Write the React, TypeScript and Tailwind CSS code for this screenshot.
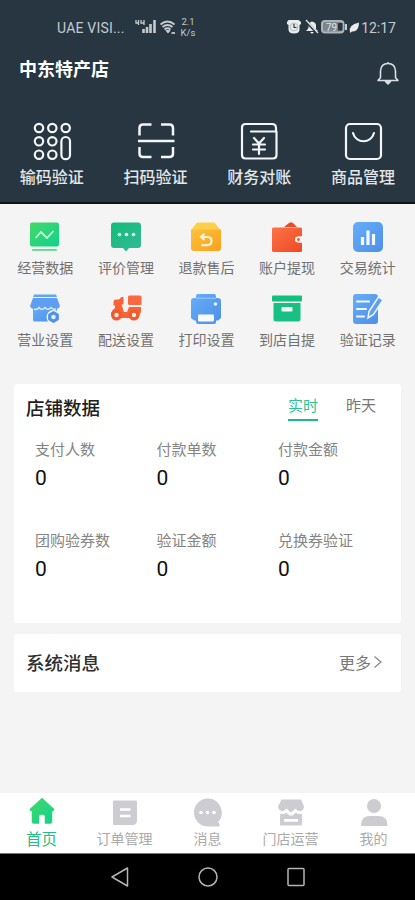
import type { ReactNode } from 'react';

const Svg = ({ size = 32, children }: { size?: number; children: ReactNode }) => (
  <svg width={size} height={size} viewBox={`0 0 ${size} ${size}`} fill="none" className="block shrink-0">{children}</svg>
);

const line = { stroke: '#f3f5f6', strokeWidth: 2.2, strokeLinecap: 'round', strokeLinejoin: 'round' } as const;

// 40x40 line icons of the dark header
const headerActions = [
  {
    label: '输码验证',
    icon: (
      <Svg size={40}>
        <g {...line}>
          {[[7, 7], [20.3, 7], [33.7, 7], [7, 20.3], [20.3, 20.3], [7, 33.7], [20.3, 33.7]].map(([x, y]) => (
            <circle key={`${x}-${y}`} cx={x} cy={y} r="4.2" />
          ))}
          <rect x="29.4" y="16" width="8.6" height="22.2" rx="4.3" />
        </g>
      </Svg>
    ),
  },
  {
    label: '扫码验证',
    icon: (
      <Svg size={40}>
        <path {...line} strokeWidth="2.5" strokeLinecap="butt" d="M3.5 14.5V7Q3.5 3.500 7 3.500H15.500M25 3.500H33.500Q37 3.500 37 7V14.500M3.500 26V32.500Q3.500 36 7 36H15.500M25 36H33.500Q37 36 37 32.500V26M2 20H38.500" />
      </Svg>
    ),
  },
  {
    label: '财务对账',
    icon: (
      <Svg size={40}>
        <path {...line} d="M33 3H6.500Q3 3 3 6.500V34Q3 37.500 6.500 37.500H34Q37.500 37.500 37.500 34V10.500H12M33 3Q37 3 37 7V10.500M15 17L20 22.500L25 17M20 22.500V33M14 23.500H26M14 28.500H26" />
      </Svg>
    ),
  },
  {
    label: '商品管理',
    icon: (
      <Svg size={40}>
        <rect {...line} x="3" y="3" width="35" height="35" rx="4" />
        <path {...line} d="M10 12C13 23 28 23 31 12" />
      </Svg>
    ),
  },
];

const tools = [
  {
    label: '经营数据',
    icon: (
      <Svg>
        <rect x="1" y="1.500" width="29" height="24" rx="2" fill="url(#green)" />
        <path d="M6.500 17L12 11L18 17L24.500 10" stroke="#c9ffd9" strokeWidth="1.800" />
        <rect x="3" y="28" width="25" height="1.800" rx="0.900" fill="#4fdb89" />
      </Svg>
    ),
  },
  {
    label: '评价管理',
    icon: (
      <Svg>
        <path d="M4 1.500H28Q31 1.500 31 4.500V24Q31 27 28 27H19L16 30.500L13 27H4Q1 27 1 24V4.500Q1 1.500 4 1.500Z" fill="url(#teal)" />
        <g fill="#e6fff5"><circle cx="9.500" cy="13.500" r="1.800" /><circle cx="16.500" cy="13.500" r="1.800" /><circle cx="23.500" cy="13.500" r="1.800" /></g>
      </Svg>
    ),
  },
  {
    label: '退款售后',
    icon: (
      <Svg>
        <path d="M7 1.500H24.500L30.500 9H1Z" fill="#ffcf4b" />
        <path d="M1 8.500H31V27Q31 30 28 30H4Q1 30 1 27Z" fill="url(#amber)" />
        <path d="M11.500 16H17.500Q21.500 16 21.500 20T17.500 24.200H11.500M14.500 12.800L11 16L14.500 19" stroke="#fff4d4" strokeWidth="2.200" />
      </Svg>
    ),
  },
  {
    label: '账户提现',
    icon: (
      <Svg>
        <path d="M13 6L18 2Q20 0.500 22 2L26 6Z" fill="#e74e2c" />
        <path d="M2.500 6.500H29.500Q31 6.500 31 8V15.500H27.500Q24 15.500 24 18.500T27.500 21.500H31V29.500Q31 31 29.500 31H2.500Q1 31 1 29.500V8Q1 6.500 2.500 6.500Z" fill="url(#red)" />
        <path d="M31 15.500H27.500Q24 15.500 24 18.500T27.500 21.500H31Z" fill="#fff5ef" />
        <circle cx="27.500" cy="18.500" r="1.500" fill="#ed623c" />
      </Svg>
    ),
  },
  {
    label: '交易统计',
    icon: (
      <Svg>
        <rect x="1" y="1" width="30" height="30" rx="5" fill="url(#blue)" />
        <path d="M10.500 16V24M16 9.500V24M21.500 13V24" stroke="#f2faff" strokeWidth="3.200" />
      </Svg>
    ),
  },
  {
    label: '营业设置',
    icon: (
      <Svg>
        <path d="M4 13H28V27Q28 28.500 26.500 28.500H5.500Q4 28.500 4 27Z" fill="url(#blue)" />
        <path d="M5 1.500H27L28 4H4Z" fill="#63a4f3" />
        <path d="M4 5H28L31 13Q30 16 27 16H5Q2 16 1 13Z" fill="#5f9ff1" />
        <path d="M5 16Q8 17.500 10 14.500Q13 18 16 14.500Q19 18 22 14.500Q24 17 27 16" stroke="#d9ebff" strokeWidth="1.400" />
        <circle cx="24.500" cy="24" r="7" fill="#f4f4f4" />
        <path d="M24.500 18.500L29.300 21.200V26.800L24.500 29.500L19.700 26.800V21.200Z" fill="#4e92e9" stroke="#4e92e9" strokeLinejoin="round" />
        <circle cx="24.500" cy="24" r="2.300" fill="#e2f0ff" />
      </Svg>
    ),
  },
  {
    label: '配送设置',
    icon: (
      <Svg>
        <path d="M3.500 8.500Q3.500 6.500 6 6.500H9L11.500 4H13.500V11.500H11.500L14 19H17L19 14H31V19L28 25H3L1 20Q2 17 5 15V12.500H3.500Z" fill="#f96437" />
        <rect x="18" y="2.500" width="13.500" height="9.500" rx="1.500" fill="#fa6940" />
        <circle cx="6.500" cy="22" r="5.500" fill="#f1592e" />
        <circle cx="24" cy="22" r="5.500" fill="#f1592e" />
        <circle cx="6.500" cy="22" r="2.200" fill="#fbece6" />
        <circle cx="24" cy="22" r="2.200" fill="#fbece6" />
      </Svg>
    ),
  },
  {
    label: '打印设置',
    icon: (
      <Svg>
        <path d="M8 1H24Q26 1 26 3V5H28Q31 5 31 8V25L28 27.500H26V29Q26 31 24 31H8Q6 31 6 29V27.500H4L1 25V8Q1 5 4 5H6V3Q6 1 8 1Z" fill="url(#blue)" />
        <path d="M6 5.300H26" stroke="#8fc2ff" strokeWidth="1.300" />
        <circle cx="25.500" cy="11" r="1.800" fill="#e9f7ff" />
        <rect x="8" y="21.500" width="16" height="7" rx="1" fill="#f7fbff" />
      </Svg>
    ),
  },
  {
    label: '到店自提',
    icon: (
      <Svg>
        <rect x="1" y="2.500" width="30" height="6" rx="1" fill="#11c17d" />
        <path d="M2.500 10H29.500V26Q29.500 28.500 27 28.500H5Q2.500 28.500 2.500 26Z" fill="#19bf83" />
        <rect x="10.500" y="14" width="11" height="4.500" rx="0.800" fill="#eafff5" />
      </Svg>
    ),
  },
  {
    label: '验证记录',
    icon: (
      <Svg>
        <rect x="1" y="1" width="25" height="30" rx="3" fill="url(#blue)" />
        <path d="M5 8.500H17M5 16H14M5 23.500H12" stroke="#eef7ff" strokeWidth="2.200" strokeLinecap="round" />
        <path d="M17 18.500L26.500 4L31 7L21.500 21.500L16 25Z" fill="#60a0ed" stroke="#ecf6ff" strokeWidth="1.500" />
      </Svg>
    ),
  },
];

const stats = ['支付人数', '付款单数', '付款金额', '团购验券数', '验证金额', '兑换券验证'];

const tabs = [
  {
    label: '首页',
    icon: (
      <Svg>
        <path d="M16 3L28 14Q28.500 16 26 16V27Q26 28.500 24 28.500H19V21Q19 19.500 16 19.500T13 21V28.500H8Q6 28.500 6 27V16Q3.500 16 4 14Z" fill="url(#green)" stroke="#2dd476" strokeWidth="0.500" strokeLinejoin="round" />
      </Svg>
    ),
  },
  {
    label: '订单管理',
    icon: (
      <Svg>
        <path d="M5 5.500H27Q28 5.500 28 6.500V25Q28 30 23.500 30H5Q4 30 4 29V6.500Q4 5.500 5 5.500Z" fill="#cdcdd1" />
        <path d="M11 14.500H21.500M11 21H21.500" stroke="#fff" strokeWidth="2.300" />
      </Svg>
    ),
  },
  {
    label: '消息',
    icon: (
      <Svg>
        <path d="M16 3.500A14 14 0 1 0 16 31.500H27.500V29L26 27A14 14 0 0 0 16 3.500Z" fill="#cdcdd1" />
        <g fill="#fff"><circle cx="9" cy="17.500" r="1.800" /><circle cx="15.500" cy="17.500" r="1.800" /><circle cx="22" cy="17.500" r="1.800" /></g>
      </Svg>
    ),
  },
  {
    label: '门店运营',
    icon: (
      <Svg>
        <path d="M6.500 4.500H26L29 11.500Q28.500 16 25 16Q22 16 20.500 13.500L16 17.500L11.500 13.500Q10 16 7 16Q3.500 15.500 3 11.500Z" fill="#cdcdd1" />
        <path d="M5 19H8Q10 19 11 17.500L14.500 20.500H17.500L21 17.500Q22 19 24 19H27V29.500Q27 30.500 26 30.500H6Q5 30.500 5 29.500Z" fill="#cdcdd1" />
        <rect x="9" y="24" width="14" height="2.800" rx="0.500" fill="#fff" />
      </Svg>
    ),
  },
  {
    label: '我的',
    icon: (
      <Svg>
        <circle cx="16" cy="11" r="7" fill="#cdcdd1" />
        <path d="M3 30Q3 21 12 21H20Q29.500 21 29.500 30Q29.500 31 28.500 31H4Q3 31 3 30Z" fill="#cdcdd1" />
      </Svg>
    ),
  },
];

function Gradients() {
  const stops = [
    ['green', '#45d86a', '#10d28b'],
    ['teal', '#12bd79', '#35b897'],
    ['amber', '#ffc13c', '#f8a11d'],
    ['red', '#fb7349', '#f04922'],
    ['blue', '#67aef7', '#4d8fe8'],
  ];
  return (
    <svg className="absolute h-0 w-0">
      <defs>
        {stops.map(([id, from, to]) => (
          <linearGradient key={id} id={id} x1="0" y1="0" x2="1" y2="1">
            <stop stopColor={from} />
            <stop offset="1" stopColor={to} />
          </linearGradient>
        ))}
      </defs>
    </svg>
  );
}

function StatusBar() {
  return (
    <div className="flex h-[52px] items-center pl-[57px] pr-[19px] pt-[1px] text-[#c4cbd0]">
      <span className="w-[78px] whitespace-nowrap pt-[2px] font-[Roboto,sans-serif] text-[14px] leading-4 tracking-[0.2px]">UAE VISI...</span>
      <svg width="42" height="18" viewBox="0 0 42 18" fill="none" className="shrink-0" stroke="currentColor">
        <path d="M1 2V5H4M3.500 2V7M6 2V5H9M9 2V7" strokeWidth="1.300" />
        <path d="M8.500 11V15M12 9V15M15.500 6V15M19.500 2V15" strokeWidth="2.600" />
        <path d="M25.500 6.500Q32.500 0.500 39.500 6.500M27.500 9Q32.500 5 37.500 9M29.500 11.500Q32.500 9 35.500 11.500" strokeWidth="1.800" />
        <path d="M31 12.500L33 15L35 12.500Z" fill="currentColor" />
        <path d="M36.500 15H40" strokeWidth="1.800" />
      </svg>
      <div className="ml-[3px] w-4 text-center font-[Roboto,sans-serif] text-[9.5px] leading-[11px]">
        <div>2.1</div>
        <div>K/s</div>
      </div>
      <div className="ml-auto flex items-center text-[#e8eced]">
        <svg width="74" height="18" viewBox="0 0 74 18" fill="none" className="mr-[1px]">
          <path d="M2.500 2H12.500L15 4V6L13.500 7V12Q13 15.500 8 15.500T2.500 12V7L1 6V4Z" fill="currentColor" />
          <circle cx="8" cy="9" r="3.800" fill="currentColor" stroke="#7d868d" strokeWidth="0.500" />
          <path d="M8 6V9.500H10.500" stroke="#273641" strokeWidth="1.200" />
          <path d="M21 12L22.500 10V7Q23 4 26 3.500Q29.500 4 30 7V11L32 13H20ZM24 14H28L26 16Z" fill="currentColor" />
          <path d="M19 2L31 15" stroke="#273641" strokeWidth="2.600" />
          <path d="M20 2L32 15" stroke="currentColor" strokeWidth="1.200" />
          <rect x="36" y="3" width="21.500" height="11.500" rx="3" fill="#7d858c" stroke="#aeb5ba" strokeWidth="2" />
          <path d="M52 5H56.500V12.500H52Z" fill="#273641" />
          <path d="M60 6V12" stroke="#c4cbd0" strokeWidth="2" />
          <text x="40" y="12.500" fill="#dfe3e5" fontSize="10" fontFamily="Roboto">79</text>
          <path d="M64 14Q62 7 73 4.500Q73 14 66 13.500L64 15Z" fill="currentColor" />
        </svg>
        <span className="pt-[2px] font-[Roboto,sans-serif] text-[14px] leading-4 text-[#c4cbd0]">12:17</span>
      </div>
    </div>
  );
}

export default function App() {
  return (
    <div className="flex h-[900px] w-[415px] flex-col overflow-hidden bg-[#f4f4f4] font-['Noto_Sans_CJK_SC',sans-serif]">
      <Gradients />
      <header className="h-[204px] shrink-0 border-b-2 border-[#0b151d] bg-[#273641]">
        <StatusBar />
        <div className="flex h-[42px] items-center justify-between pl-[19px] pr-[15px]">
          <h1 className="-mt-[10px] text-[18px] font-bold leading-6 text-white">中东特产店</h1>
          <svg width="24" height="24" viewBox="0 0 24 24" fill="none" stroke="#d8dfe2" strokeWidth="1.600" strokeLinejoin="round">
            <path d="M2 19.500H22L19.500 16.500V10Q19 2.500 12 2.500T4.500 10V16.500ZM12 1V2.500" />
            <path d="M9.500 20.500L12 23L14.500 20.500Z" fill="#d8dfe2" />
          </svg>
        </div>
        <div className="grid grid-cols-4 pt-[27px]">
          {headerActions.map(({ label, icon }) => (
            <div key={label} className="flex flex-col items-center">
              {icon}
              <span className="mt-[3px] text-[16px] font-medium leading-6 text-[#e2e7e9]">{label}</span>
            </div>
          ))}
        </div>
      </header>

      <section className="grid grid-cols-5 gap-y-2 pl-[5px] pr-[7px] pt-[17px]">
        {tools.map(({ label, icon }) => (
          <div key={label} className="flex h-16 flex-col items-center">
            {icon}
            <span className="mt-1 text-[14px] leading-5 text-[#707070]">{label}</span>
          </div>
        ))}
      </section>

      <section className="mx-[14px] mt-[27px] h-[239px] shrink-0 rounded-[3px] bg-white">
        <div className="flex items-start pl-3 pr-[25px] pt-[10px]">
          <h2 className="text-[18.500px] font-medium leading-[26px] text-[#202020]">店铺数据</h2>
          <div className="ml-auto flex gap-7 text-[15px] leading-[22px]">
            <span className="h-[27px] border-b-2 border-[#18bd86] text-[#2fc291]">实时</span>
            <span className="text-[#777]">昨天</span>
          </div>
        </div>
        <div className="grid grid-cols-[121.500px_121.500px_1fr] pl-[21px] pt-[17px]">
          {stats.map(label => (
            <div key={label} className="h-[91px]">
              <div className="text-[15px] leading-[22px] text-[#858585]">{label}</div>
              <div className="mt-[6px] font-[Roboto,sans-serif] text-[21px] leading-6 text-[#111]">0</div>
            </div>
          ))}
        </div>
      </section>

      <section className="mx-[14px] mt-[11px] flex h-[58px] shrink-0 items-center rounded-[3px] bg-white pb-[2px] pl-3 pr-[18px]">
        <h2 className="text-[18.500px] font-medium leading-[26px] text-[#303030]">系统消息</h2>
        <span className="ml-auto text-[16px] leading-6 text-[#777]">更多</span>
        <svg width="10" height="14" viewBox="0 0 10 14" fill="none" stroke="#888" strokeWidth="1.200" className="ml-[2px]">
          <path d="M1.500 1.500L8 7L1.500 12.500" />
        </svg>
      </section>

      <nav className="mt-auto grid h-[60px] shrink-0 grid-cols-5 bg-white">
        {tabs.map(({ label, icon }, i) => (
          <div key={label} className="flex flex-col items-center pt-[2px]">
            {icon}
            <span className={i === 0 ? 'text-[15.500px] leading-[22px] text-[#22bd86]' : 'text-[14px] leading-[22px] text-[#aaa]'}>{label}</span>
          </div>
        ))}
      </nav>
      <div className="flex h-[47px] shrink-0 justify-center gap-[66px] border-t border-[#777] bg-black pt-[12px]">
        <svg width="22" height="22" viewBox="0 0 22 22" fill="none" stroke="#b5b5b5" strokeWidth="1.500" strokeLinejoin="round"><path d="M18.500 2V20L3 11Z" /></svg>
        <svg width="22" height="22" viewBox="0 0 22 22" fill="none" stroke="#b5b5b5" strokeWidth="1.500"><circle cx="11" cy="11" r="9" /></svg>
        <svg width="22" height="22" viewBox="0 0 22 22" fill="none" stroke="#b5b5b5" strokeWidth="1.500"><rect x="3" y="2.500" width="16" height="17" rx="1" /></svg>
      </div>
    </div>
  );
}
